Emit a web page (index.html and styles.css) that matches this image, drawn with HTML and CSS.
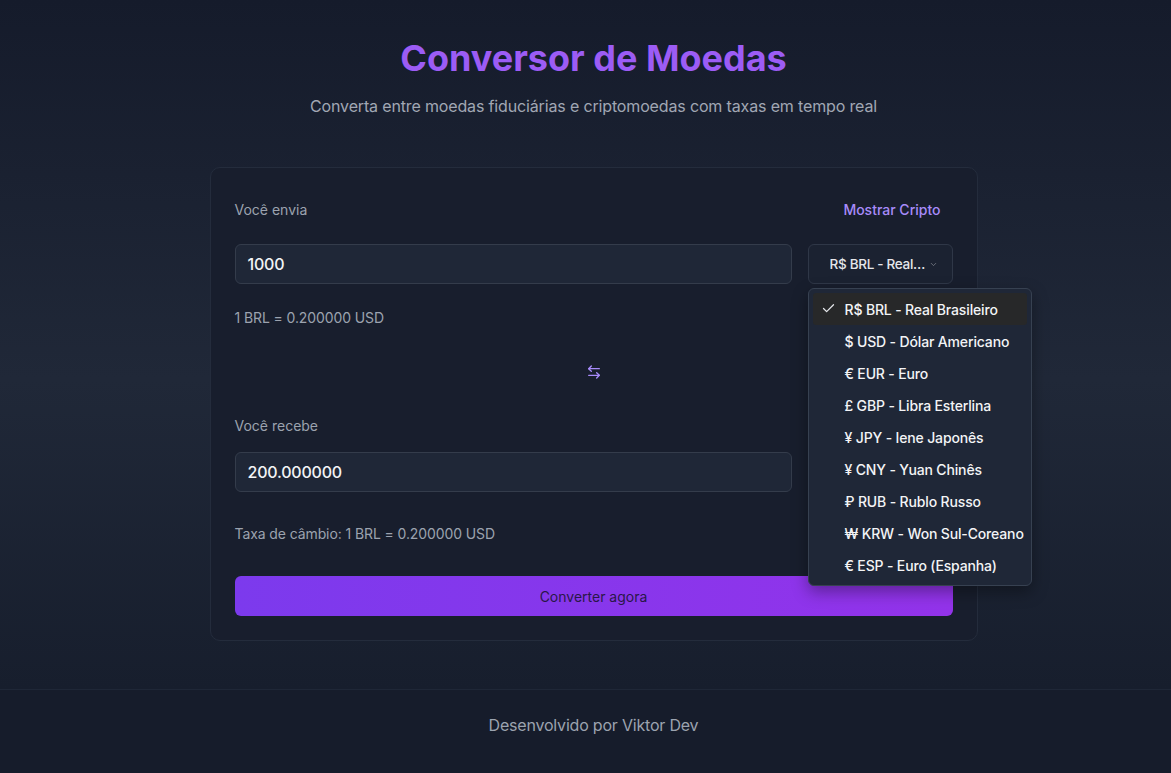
FILE: index.html
```html
<!DOCTYPE html>
<html lang="pt-BR">
<head>
<meta charset="utf-8">
<title>Conversor de Moedas</title>
<link rel="stylesheet" href="styles.css">
</head>
<body>
<div class="page">
  <main class="main">
    <header class="hero">
      <h1 class="title">Conversor de Moedas</h1>
      <p class="subtitle">Converta entre moedas fiduciárias e criptomoedas com taxas em tempo real</p>
    </header>

    <section class="card">
      <div class="label-row">
        <span class="label">Você envia</span>
        <button class="link-btn">Mostrar Cripto</button>
      </div>
      <div class="field-row">
        <div class="input">1000</div>
        <div class="select-wrap">
          <button class="select">
            <span class="select-text">R$ BRL - Real Brasileiro</span>
            <svg class="chev" viewBox="0 0 24 24" width="9" height="9" fill="none" stroke="currentColor" stroke-width="2" stroke-linecap="round" stroke-linejoin="round"><path d="m6 9 6 6 6-6"/></svg>
          </button>
          <ul class="menu">
            <li class="item active"><svg class="check" viewBox="0 0 24 24" width="15" height="15" fill="none" stroke="currentColor" stroke-width="2" stroke-linecap="round" stroke-linejoin="round"><path d="M20 6 9 17l-5-5"/></svg>R$ BRL - Real Brasileiro</li>
            <li class="item">$ USD - Dólar Americano</li>
            <li class="item">€ EUR - Euro</li>
            <li class="item">£ GBP - Libra Esterlina</li>
            <li class="item">¥ JPY - Iene Japonês</li>
            <li class="item">¥ CNY - Yuan Chinês</li>
            <li class="item">₽ RUB - Rublo Russo</li>
            <li class="item">₩ KRW - Won Sul-Coreano</li>
            <li class="item">€ ESP - Euro (Espanha)</li>
          </ul>
        </div>
      </div>
      <p class="rate">1 BRL = 0.200000 USD</p>

      <div class="swap-row">
        <button class="swap">
          <svg viewBox="0 0 24 24" width="16" height="16" fill="none" stroke="currentColor" stroke-width="2" stroke-linecap="round" stroke-linejoin="round"><path d="M8 3 4 7l4 4"/><path d="M4 7h16"/><path d="m16 21 4-4-4-4"/><path d="M20 17H4"/></svg>
        </button>
      </div>

      <div class="label-row plain">
        <span class="label">Você recebe</span>
      </div>
      <div class="field-row">
        <div class="input">200.000000</div>
        <div class="select-wrap">
          <button class="select">
            <span class="select-text">$ USD - Dólar Americano</span>
            <svg class="chev" viewBox="0 0 24 24" width="9" height="9" fill="none" stroke="currentColor" stroke-width="2" stroke-linecap="round" stroke-linejoin="round"><path d="m6 9 6 6 6-6"/></svg>
          </button>
        </div>
      </div>
      <p class="rate rate-2">Taxa de câmbio: 1 BRL = 0.200000 USD</p>

      <button class="convert">Converter agora</button>
    </section>
  </main>

  <footer class="footer">
    <p>Desenvolvido por Viktor Dev</p>
  </footer>
</div>
</body>
</html>
```

FILE: styles.css
```css
* { box-sizing: border-box; }

html, body {
  margin: 0;
  padding: 0;
}

body {
  font-family: Inter, "Noto Sans", "Liberation Sans", sans-serif;
  background: #161c2b;
  color: #e5e7eb;
  overflow: hidden;
}

.page {
  min-height: 773px;
}

.main {
  background: linear-gradient(to bottom, #151b2b 0%, #202838 55%, #171e2d 100%);
  padding: 38px 0 48px 16px;
  height: 689px;
}

.hero {
  text-align: center;
}

.title {
  margin: 0;
  font-size: 36px;
  line-height: 40px;
  font-weight: 700;
  color: #9c5cf5;
}

.subtitle {
  margin: 16px 0 0;
  font-size: 16px;
  line-height: 24px;
  letter-spacing: -0.15px;
  color: #a1a7b4;
}

.card {
  width: 768px;
  margin: 49px auto 0;
  background: #181e2d;
  border: 1px solid #242c3c;
  border-radius: 10px;
  padding: 24px;
  display: flex;
  flex-direction: column;
}

.label-row {
  display: flex;
  justify-content: space-between;
  align-items: center;
  height: 36px;
  margin-bottom: 16px;
}

.label-row.plain {
  height: 20px;
}

.label {
  font-size: 14px;
  line-height: 20px;
  color: #9ca3af;
}

.link-btn {
  background: none;
  border: none;
  font-family: inherit;
  font-size: 14px;
  line-height: 20px;
  font-weight: 500;
  color: #a78bfa;
  padding: 8px 12px;
  cursor: pointer;
}

.field-row {
  display: flex;
  gap: 16px;
  align-items: center;
}

.input {
  flex: 1;
  height: 40px;
  background: #1f2737;
  border: 1px solid #343c4b;
  border-radius: 6px;
  padding: 0 12px;
  display: flex;
  align-items: center;
  font-size: 16px;
  font-weight: 500;
  letter-spacing: -0.2px;
  color: #f3f4f6;
}

.select-wrap {
  position: relative;
  width: 145px;
}

.select {
  width: 145px;
  height: 40px;
  background: #1b2231;
  border: 1px solid #2f3747;
  border-radius: 6px;
  display: flex;
  align-items: center;
  padding: 0 14px 0 21px;
  gap: 2px;
  font-family: inherit;
  color: #e5e7eb;
}

.select-text {
  flex: 1;
  min-width: 0;
  white-space: nowrap;
  overflow: hidden;
  text-overflow: ellipsis;
  font-size: 13.5px;
  font-weight: 500;
  letter-spacing: -0.3px;
  text-align: left;
}

.chev {
  flex: none;
  opacity: 0.5;
}

.menu {
  position: absolute;
  top: 44px;
  left: 0;
  z-index: 10;
  width: 224px;
  margin: 0;
  padding: 4px;
  list-style: none;
  background: #1f2737;
  border: 1px solid #374151;
  border-radius: 6px;
  box-shadow: 0 6px 16px rgba(0, 0, 0, 0.35);
}

.item {
  position: relative;
  height: 32px;
  display: flex;
  align-items: center;
  padding-left: 32px;
  font-size: 14px;
  font-weight: 500;
  letter-spacing: -0.15px;
  color: #f3f4f6;
  border-radius: 3px;
  white-space: nowrap;
}

.item.active {
  background: #272829;
}

.check {
  position: absolute;
  left: 8px;
  top: 8px;
  color: #e5e7eb;
}

.rate {
  margin: 24px 0 0;
  font-size: 14px;
  line-height: 20px;
  letter-spacing: -0.1px;
  color: #9ca3af;
}

.rate-2 {
  margin-top: 32px;
}

.swap-row {
  display: flex;
  justify-content: center;
  margin: 24px 0;
}

.swap {
  width: 40px;
  height: 40px;
  background: none;
  border: none;
  display: flex;
  align-items: center;
  justify-content: center;
  color: #a78bfa;
  padding: 0;
}

.convert {
  margin-top: 32px;
  height: 40px;
  border: none;
  border-radius: 6px;
  background: linear-gradient(to right, #7c3aed, #9333ea);
  font-family: inherit;
  font-size: 14px;
  color: #2a1748;
}

.footer {
  border-top: 1px solid #1f2737;
  background: #161c2b;
  padding: 23px 0 24px 16px;
  text-align: center;
}

.footer p {
  margin: 0;
  font-size: 16px;
  line-height: 24px;
  letter-spacing: -0.2px;
  color: #9ca3af;
}
```
